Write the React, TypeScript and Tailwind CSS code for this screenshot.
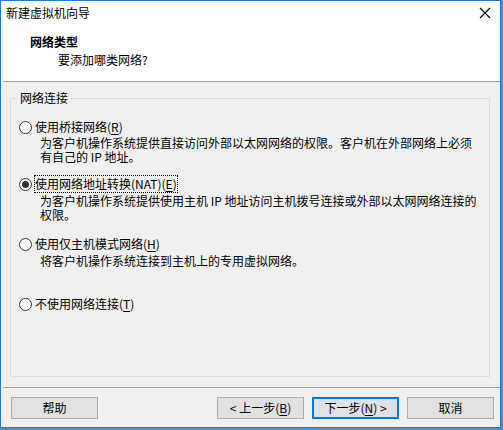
const font = { fontFamily: '"Noto Sans CJK SC", "Liberation Sans", sans-serif' }

const Radio = ({ checked }: { checked?: boolean }) => (
    <span className="flex h-[13px] w-[13px] shrink-0 items-center justify-center rounded-full border border-[#333333] bg-white">
        {checked && <span className="h-[7px] w-[7px] rounded-full bg-[#333333]" />}
    </span>
)

const Key = ({ k }: { k: string }) => (
    <>
        (<span className="underline underline-offset-[2px]">{k}</span>)
    </>
)

const Button = ({ children, primary }: { children: React.ReactNode; primary?: boolean }) => (
    <button
        type="button"
        className={
            primary
                ? 'h-[22px] w-[87px] border-2 border-[#0078d7] bg-[#e1e1e1] text-[12px] leading-[18px] text-black'
                : 'h-[22px] w-[87px] border border-[#adadad] bg-[#e1e1e1] text-[12px] leading-[20px] text-black'
        }
    >
        {children}
    </button>
)

const App = () => {
    return (
        <div className="h-[430px] w-[503px] overflow-hidden bg-[#4b8fc6]" style={font}>
            <div className="flex h-[428px] w-[501px] flex-col border border-[#1a7fd2] bg-[#f0f0f0] text-[12px] text-black">
                {/* header */}
                <div className="h-[80px] bg-white">
                    <div className="flex h-[24px] items-center justify-between pl-[5px] pr-[9px] leading-[24px]">
                        <span>新建虚拟机向导</span>
                        <svg width="12" height="12" viewBox="0 0 12 12" className="mt-[-1px]">
                            <path d="M1 1 L11 11 M11 1 L1 11" stroke="#000" strokeWidth="1.1" />
                        </svg>
                    </div>
                    <div className="mt-[9px] pl-[29px] font-bold leading-[16px]">网络类型</div>
                    <div className="mt-[2px] pl-[57px] leading-[16px]">要添加哪类网络?</div>
                </div>
                <div className="ml-[2px] h-px bg-[#a0a0a0]" />

                {/* body */}
                <fieldset className="ml-[9px] mt-[9px] h-[286px] w-[480px] border border-[#dcdcdc] px-[8px]">
                    <legend className="ml-[-1px] px-[2px] leading-[14px]">网络连接</legend>

                    <div className="mt-[14px] flex items-center gap-[3px] leading-[16px]">
                        <Radio />
                        <span>使用桥接网络<Key k="R" /></span>
                    </div>
                    <div className="mt-[1px] whitespace-nowrap pl-[21px] leading-[14px]">
                        为客户机操作系统提供直接访问外部以太网网络的权限。客户机在外部网络上必须
                        <br />
                        有自己的 IP 地址。
                    </div>

                    <div className="mt-[12px] flex items-center gap-[3px] leading-[16px]">
                        <Radio checked />
                        <span className="outline outline-1 outline-dotted outline-black">
                            使用网络地址转换(NAT)<Key k="E" />
                        </span>
                    </div>
                    <div className="mt-[2px] whitespace-nowrap pl-[21px] leading-[14px]">
                        为客户机操作系统提供使用主机 IP 地址访问主机拨号连接或外部以太网网络连接的
                        <br />
                        权限。
                    </div>

                    <div className="mt-[14px] flex items-center gap-[3px] leading-[16px]">
                        <Radio />
                        <span>使用仅主机模式网络<Key k="H" /></span>
                    </div>
                    <div className="mt-[2px] whitespace-nowrap pl-[21px] leading-[14px]">
                        将客户机操作系统连接到主机上的专用虚拟网络。
                    </div>

                    <div className="mt-[28px] flex items-center gap-[3px] leading-[16px]">
                        <Radio />
                        <span>不使用网络连接<Key k="T" /></span>
                    </div>
                </fieldset>

                <div className="ml-[2px] mt-[10px] h-px bg-[#a0a0a0]" />

                {/* buttons */}
                <div className="mt-[9px] flex pl-[10px] pr-[6px]">
                    <Button>帮助</Button>
                    <div className="flex-1" />
                    <div className="flex gap-[8px]">
                        <Button>&lt; 上一步<Key k="B" /></Button>
                        <Button primary>下一步<Key k="N" /> &gt;</Button>
                        <Button>取消</Button>
                    </div>
                </div>
            </div>
        </div>
    )
}

export default App
